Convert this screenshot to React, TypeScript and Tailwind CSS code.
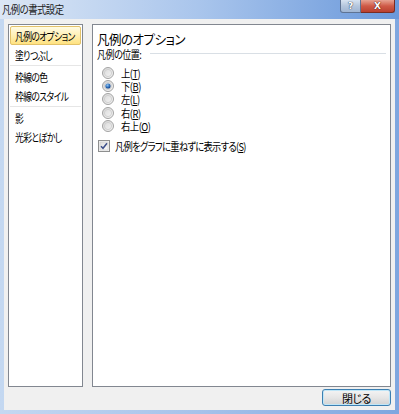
import React from "react";

const font = "font-['Noto_Sans_CJK_JP','Noto_Sans_CJK_SC',sans-serif] [font-feature-settings:'palt'_1]";

function Radio({ checked }: { checked?: boolean }) {
  return (
    <svg width="12" height="12" viewBox="0 0 12 12" className="shrink-0">
      <defs>
        <linearGradient id={checked ? "rg1" : "rg0"} x1="0" y1="0" x2="1" y2="1">
          <stop offset="0" stopColor="#d6d6d6" />
          <stop offset="1" stopColor="#f8f8f8" />
        </linearGradient>
        <radialGradient id="dot" cx="0.4" cy="0.35" r="0.7">
          <stop offset="0" stopColor="#8fc3f0" />
          <stop offset="0.6" stopColor="#2a6ab8" />
          <stop offset="1" stopColor="#163d78" />
        </radialGradient>
      </defs>
      <circle cx="6" cy="6" r="5.5" fill={`url(#${checked ? "rg1" : "rg0"})`} stroke="#a3a3a3" strokeWidth="1" />
      <circle cx="6" cy="6" r="3.6" fill="none" stroke="#cacaca" strokeWidth="0.8" />
      {checked && <circle cx="6" cy="6" r="2.6" fill="url(#dot)" />}
    </svg>
  );
}

function Checkbox() {
  return (
    <svg width="12" height="12" viewBox="0 0 12 12" className="shrink-0">
      <defs>
        <linearGradient id="cb" x1="0" y1="0" x2="1" y2="1">
          <stop offset="0" stopColor="#dcdcdc" />
          <stop offset="1" stopColor="#fbfbfb" />
        </linearGradient>
      </defs>
      <rect x="0.5" y="0.5" width="11" height="11" fill="#f4f4f4" stroke="#8e8f8f" />
      <rect x="2" y="2" width="8" height="8" fill="url(#cb)" stroke="#c9c9c9" strokeWidth="0.6" />
      <path d="M3 6.2 L5 8.3 L9 3.3" fill="none" stroke="#3c4f8a" strokeWidth="1.5" />
    </svg>
  );
}

export default function App() {
  const groups = [
    ["凡例のオプション", "塗りつぶし"],
    ["枠線の色", "枠線のスタイル"],
    ["影", "光彩とぼかし"],
  ];
  const radios: [string, string, boolean][] = [
    ["上", "T", false],
    ["下", "B", true],
    ["左", "L", false],
    ["右", "R", false],
    ["右上", "O", false],
  ];
  return (
    <div className={`w-[399px] h-[414px] flex flex-col bg-gradient-to-r from-[#c4d8f1] via-[#a6c2ea] to-[#7ea6df] ${font} text-black`}>
      {/* Title bar */}
      <div className="h-[19px] flex items-start bg-gradient-to-r from-[#dce7f5] via-[#a9c5ec] to-[#6a98da]">
        <div className="pl-[2px] pt-[2px] text-[11px] leading-[14px] tracking-[-0.6px] text-[#1a1a1a] whitespace-nowrap">
          <span className="inline-block origin-left scale-x-[0.85]">凡例の書式設定</span>
        </div>
        <div className="ml-auto mr-[4px] flex">
          <div className="w-[21px] h-[13px] rounded-bl-[3px] border border-t-0 border-[#5e7393] bg-gradient-to-b from-[#d7e3f1] via-[#b4c6dd] to-[#9fb5d3] flex items-center justify-center overflow-hidden">
            <span className="text-[9px] leading-[10px] font-bold text-white [text-shadow:0_0_1px_#2a3a55,0_0_1px_#2a3a55] font-['DejaVu_Sans',sans-serif]">?</span>
          </div>
          <div className="w-[34px] h-[13px] rounded-br-[3px] border border-t-0 border-l-0 border-[#7a2c22] bg-gradient-to-b from-[#e6a393] via-[#cf5a47] to-[#b9402f] flex items-center justify-center overflow-hidden">
            <span className="text-[9px] leading-[10px] font-bold text-white [text-shadow:0_0_1px_#4a1108,0_0_1px_#4a1108] font-['DejaVu_Sans',sans-serif]">X</span>
          </div>
        </div>
      </div>
      {/* Client */}
      <div className="mx-[4px] mb-[4px] flex-1 bg-[#f0f0f0] pt-[5px] pl-[4px] pr-[4px] pb-[4px] flex flex-col">
        <div className="h-[363px] flex">
          {/* Left list */}
          <div className="w-[75px] border border-[#828790] bg-white pt-[1px] flex flex-col">
            {groups.map((g, gi) => (
              <React.Fragment key={gi}>
                {gi > 0 && (
                  <div className="h-[3px] flex items-center px-[1px]">
                    <div className="h-px w-full bg-[#e6e6e6]" />
                  </div>
                )}
                {g.map((t) => {
                  const sel = t === "凡例のオプション";
                  return (
                    <div
                      key={t}
                      className={`h-[19px] mx-[1px] flex items-center text-[11px] leading-[12px] tracking-[-0.8px] whitespace-nowrap ${
                        sel
                          ? "rounded-[2px] border border-[#e3c26a] bg-gradient-to-b from-[#fffbe3] via-[#fff0b5] to-[#ffe27f] pl-[4px]"
                          : "pl-[5px]"
                      }`}
                    >
                      <span className="inline-block origin-left scale-x-[0.8]">{t}</span>
                    </div>
                  );
                })}
              </React.Fragment>
            ))}
          </div>
          {/* Right panel */}
          <div className="ml-[9px] flex-1 border border-[#828790] bg-white pl-[4px] pr-[4px] pt-[6px] flex flex-col">
            <div className="h-[16px] text-[13px] leading-[16px] tracking-[-0.5px] whitespace-nowrap">
              <span className="inline-block origin-left scale-x-[0.96]">凡例のオプション</span>
            </div>
            <div className="h-[13px] flex items-center">
              <span className="w-[50px] text-[11px] leading-[12px] tracking-[-0.6px] whitespace-nowrap">
                <span className="inline-block origin-left scale-x-[0.82]">凡例の位置:</span>
              </span>
              <div className="ml-[3px] h-px flex-1 bg-[#d9dfe5]" />
            </div>
            <div className="mt-[6px] flex flex-col">
              {radios.map(([k, a, c]) => (
                <div key={a} className="h-[13.4px] flex items-center pl-[5px]">
                  <Radio checked={c} />
                  <span className="ml-[7px] text-[11px] leading-[12px] tracking-[-0.6px] whitespace-nowrap">
                    <span className="inline-block origin-left scale-x-[0.85]">
                      {k}(<u>{a}</u>)
                    </span>
                  </span>
                </div>
              ))}
            </div>
            <div className="mt-[6px] h-[14px] flex items-center pl-[1px]">
              <Checkbox />
              <span className="ml-[5px] text-[11px] leading-[12px] tracking-[-0.8px] whitespace-nowrap">
                <span className="inline-block origin-left scale-x-[0.84]">
                  凡例をグラフに重ねずに表示する(<u>S</u>)
                </span>
              </span>
            </div>
          </div>
        </div>
        <div className="mt-[2px] flex justify-end">
          <div className="w-[69px] h-[17px] rounded-[3px] border border-[#3c7fb1] bg-gradient-to-b from-[#f4f4f4] via-[#e6e6e6] to-[#d2d2d2] shadow-[inset_0_0_0_1px_#bfe6f8] flex items-center justify-center text-[11px] leading-[12px] tracking-[-0.5px]">
            閉じる
          </div>
        </div>
      </div>
    </div>
  );
}
